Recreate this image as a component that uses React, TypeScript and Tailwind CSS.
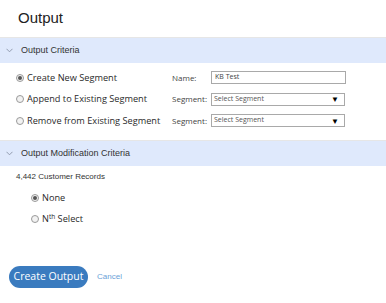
import React from 'react';

const Radio: React.FC<{ checked?: boolean }> = ({ checked }) => (
  <span className="inline-flex h-[8px] w-[8px] items-center justify-center rounded-full border border-[#9a9a9a] bg-[#f2f2f2]">
    {checked && <span className="h-[4px] w-[4px] rounded-full bg-[#555]" />}
  </span>
);

const SectionHeader: React.FC<{ title: string }> = ({ title }) => (
  <div className="flex h-[26px] items-center border-t border-[#e6e6e6] bg-[#dfe9fc] pl-[6px]">
    <svg width="7" height="5" viewBox="0 0 7 5" className="mr-[8px]">
      <path d="M0.5 0.8 L3.5 3.8 L6.5 0.8" fill="none" stroke="#8a93a6" strokeWidth="0.9" />
    </svg>
    <span className="text-[9px] text-[#333] [font-family:'Liberation_Sans',Arial,sans-serif]">{title}</span>
  </div>
);

const SelectBox: React.FC = () => (
  <div className="flex h-[13px] w-[134px] items-center justify-between border border-[#a9a9a9] bg-white px-[2px]">
    <span className="text-[7px] text-[#555] [font-family:'Open_Sans',sans-serif]">Select Segment</span>
    <span className="mr-[3px] text-[8px] leading-none text-black">▼</span>
  </div>
);

const options = [
  { label: 'Create New Segment', field: 'Name:', checked: true },
  { label: 'Append to Existing Segment', field: 'Segment:' },
  { label: 'Remove from Existing Segment', field: 'Segment:' },
];

export default function App() {
  return (
    <div className="h-[303px] w-[386px] bg-white [font-family:'Open_Sans',sans-serif] text-[#333]">
      <div className="flex h-[37px] items-center pl-[18px]">
        <h1 className="text-[15px] text-[#222] [font-family:'Liberation_Sans',Arial,sans-serif]">Output</h1>
      </div>
      <SectionHeader title="Output Criteria" />
      <div className="flex flex-col gap-[8.5px] pt-[8px] pb-[13px]">
        {options.map((o) => (
          <div key={o.label} className="flex h-[13px] items-center">
            <div className="flex w-[172px] items-center gap-[3px] pl-[16px]">
              <Radio checked={o.checked} />
              <span className="whitespace-nowrap text-[9.2px] text-[#2a2a2a]">{o.label}</span>
            </div>
            <span className="w-[39px] text-[8px] text-[#444]">{o.field}</span>
            {o.checked ? (
              <div className="flex h-[13px] w-[135px] items-center border border-[#a9a9a9] bg-white px-[3px]">
                <span className="text-[7px] text-[#444]">KB Test</span>
              </div>
            ) : (
              <SelectBox />
            )}
          </div>
        ))}
      </div>
      <SectionHeader title="Output Modification Criteria" />
      <div className="pl-[16px] pt-[5px]">
        <div className="text-[8px] text-[#333] [font-family:'Liberation_Sans',Arial,sans-serif]">4,442 Customer Records</div>
        <div className="mt-[8px] flex flex-col gap-[8px] pl-[15px]">
          <div className="flex h-[13px] items-center gap-[3px]">
            <Radio checked />
            <span className="text-[9.2px] text-[#2a2a2a]">None</span>
          </div>
          <div className="flex h-[13px] items-center gap-[3px]">
            <Radio />
            <span className="text-[9.2px] leading-[13px] text-[#2a2a2a]">
              N<sup className="relative -top-[3px] align-baseline text-[6.5px] leading-none">th</sup> Select
            </span>
          </div>
        </div>
      </div>
      <div className="mt-[41px] flex items-center pl-[9px]">
        <button className="h-[22px] w-[79px] rounded-full bg-[#3a7bbf] text-[10.5px] text-white">Create Output</button>
        <span className="ml-[9px] text-[8px] text-[#6a9fd8] [font-family:'Liberation_Sans',Arial,sans-serif]">Cancel</span>
      </div>
    </div>
  );
}
